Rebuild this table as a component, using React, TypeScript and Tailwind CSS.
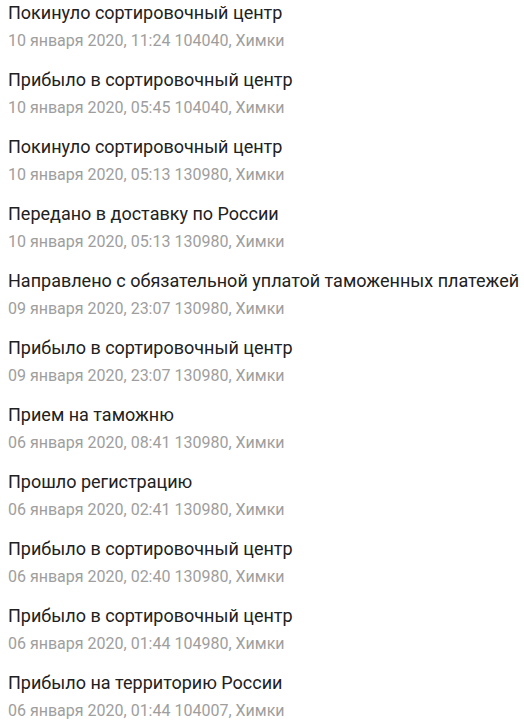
const EVENTS = [
  ['Покинуло сортировочный центр', '10 января 2020, 11:24 104040, Химки'],
  ['Прибыло в сортировочный центр', '10 января 2020, 05:45 104040, Химки'],
  ['Покинуло сортировочный центр', '10 января 2020, 05:13 130980, Химки'],
  ['Передано в доставку по России', '10 января 2020, 05:13 130980, Химки'],
  ['Направлено с обязательной уплатой таможенных платежей', '09 января 2020, 23:07 130980, Химки'],
  ['Прибыло в сортировочный центр', '09 января 2020, 23:07 130980, Химки'],
  ['Прием на таможню', '06 января 2020, 08:41 130980, Химки'],
  ['Прошло регистрацию', '06 января 2020, 02:41 130980, Химки'],
  ['Прибыло в сортировочный центр', '06 января 2020, 02:40 130980, Химки'],
  ['Прибыло в сортировочный центр', '06 января 2020, 01:44 104980, Химки'],
  ['Прибыло на территорию России', '06 января 2020, 01:44 104007, Химки'],
]

export default function App() {
  return (
    <div className="min-h-[726px] bg-white pl-2 font-['Roboto',sans-serif]">
      {EVENTS.map(([title, meta], i) => (
        <div key={i} className="h-[67px] pt-[1px]">
          <div className="whitespace-nowrap text-[18px] leading-6 text-[#212121]">{title}</div>
          <div className="mt-[6px] whitespace-nowrap text-[16px] leading-5 text-[#9e9e9e]">{meta}</div>
        </div>
      ))}
    </div>
  )
}
